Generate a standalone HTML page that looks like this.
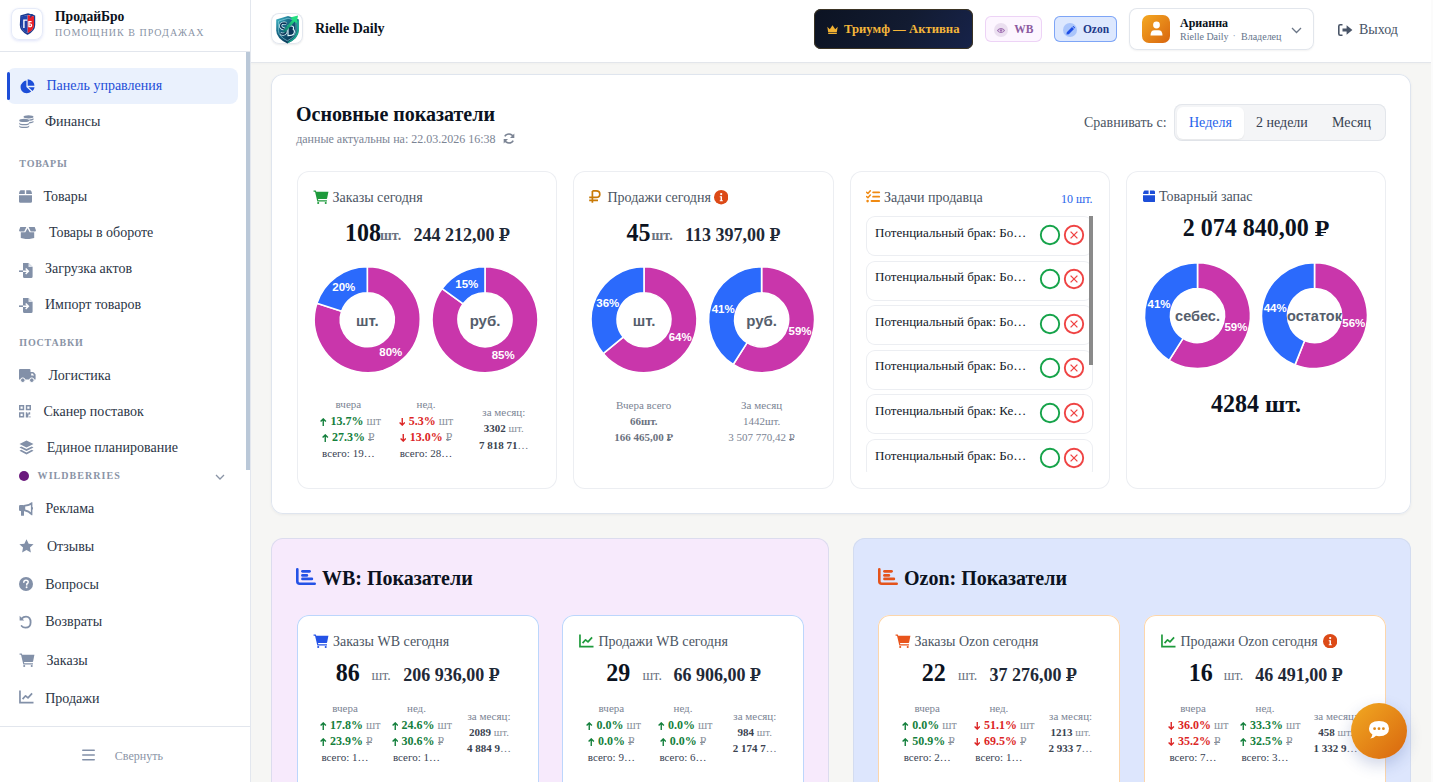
<!DOCTYPE html><html><head><meta charset="utf-8"><style>
html,body{margin:0;padding:0}
body{width:1433px;height:782px;overflow:hidden;position:relative;background:#f6f6f4;font-family:"Liberation Serif",serif}
.t{position:absolute;line-height:1;white-space:nowrap}
.r{position:absolute;display:block}
.rub{position:relative;display:inline-block}
.rub::after{content:"";position:absolute;left:0.02em;top:0.635em;width:0.44em;height:0.075em;background:currentColor}
.dg{display:inline-block;transform:scaleY(1.09);transform-origin:50% 83.75%}
.ar{display:inline-block;vertical-align:-1px;margin-right:3.5px}
</style></head><body>

<div class="r" style="left:0.00px;top:0.00px;width:250.00px;height:782.00px;background:#fff;border-radius:0px;"></div>
<div class="r" style="left:250.00px;top:0.00px;width:1.00px;height:782.00px;background:#e3e7ee;border-radius:0px;"></div>
<div class="r" style="left:0.00px;top:51.00px;width:250.00px;height:1.00px;background:#e2e6ed;border-radius:0px;"></div>
<div class="r" style="left:246.00px;top:52.00px;width:4.00px;height:418.00px;background:#bac8d8;border-radius:0px;"></div>
<div class="r" style="left:11.00px;top:8.00px;width:32.00px;height:32.00px;background:#fff;border-radius:8px;box-shadow:inset 0 0 0 1px #e1e7f7;box-shadow:0 1px 3px rgba(80,100,220,0.18), inset 0 0 0 1px #e6ebf8;"></div>
<svg class="r" style="left:19.00px;top:13.00px;" width="17" height="22" viewBox="0 0 17 22"><path d="M2 3 L9 1 L15.5 3 L15.5 12 Q15.5 17.5 8.5 21 Q1.5 17.5 1.5 12Z" fill="#fff" stroke="#1a3a8f" stroke-width="1.4"/><path d="M8.5 2 L15 3.6 V12 Q15 17 8.5 20.3Z" fill="#e8202a"/><path d="M8.5 2 L2 3.6 V12 Q2 17 8.5 20.3Z" fill="#2043a8"/><path d="M4.2 6.5 H8.2 V7.8 H5.6 V15 H4.2Z" fill="#fff"/><path d="M9.3 8 H12.6 V9.2 H10.6 V10.4 H11.6 Q13.2 10.4 13.2 12.2 Q13.2 14.2 11.6 14.2 H9.3Z M10.6 11.5 V13.1 H11.4 Q11.9 13.1 11.9 12.3 Q11.9 11.5 11.4 11.5Z" fill="#fff"/><path d="M12 1 L10.5 5.5 L14.5 1.5Z" fill="#1a3a8f"/></svg>
<div class="t" style="top:9.91px;font-size:13.6px;color:#0b1220;font-weight:700;font-family:'Liberation Serif', serif;left:55.00px;">ПродайБро</div>
<div class="t" style="top:28.03px;font-size:10px;color:#8a94a6;font-weight:400;font-family:'Liberation Serif', serif;letter-spacing:1px;left:55.00px;">ПОМОЩНИК В ПРОДАЖАХ</div>
<div class="r" style="left:7.00px;top:68.00px;width:231.00px;height:36.00px;background:#eaf1fd;border-radius:8px;"></div>
<div class="r" style="left:7.00px;top:72.00px;width:3.00px;height:28.00px;background:#1d4ed8;border-radius:2px;"></div>
<svg class="r" style="left:20.00px;top:79.00px;" width="15" height="15" viewBox="0 0 16 16"><path d="M6.8 1.6 V8.6 L12 13.4 Q10 15.3 7.2 15.3 Q3.8 15.3 1.9 12.8 Q0.6 11.1 0.6 8.6 Q0.6 5.6 2.8 3.6 Q4.5 1.9 6.8 1.6Z" fill="#1d4ed8"/><path d="M8.2 0.3 Q11.6 0.5 13.8 3 Q15.3 4.8 15.4 7.1 H8.2Z" fill="#1d4ed8"/><path d="M9 8.7 H15.5 Q15.3 11 13.4 12.9Z" fill="#1d4ed8"/></svg>
<div class="t" style="top:78.98px;font-size:14px;color:#1d4ed8;font-weight:400;font-family:'Liberation Serif', serif;left:46.50px;">Панель управления</div>
<svg class="r" style="left:19.00px;top:115.00px;" width="15" height="14" viewBox="0 0 15 14"><ellipse cx="9.5" cy="1.8" rx="5" ry="1.6" fill="#8290a8"/><path d="M10.2 4.4 Q13.4 4.2 14.5 3.3 V4.7 Q13.4 5.6 10.2 5.8Z M10.2 7 Q13.4 6.8 14.5 5.9 V7.3 Q13.4 8.2 10.2 8.4Z" fill="#8290a8"/><ellipse cx="5.2" cy="5.4" rx="5" ry="1.7" fill="#8290a8"/><path d="M0.2 7.4 Q0.6 8.9 5.2 8.9 Q9.8 8.9 10.2 7.4 V8.8 Q9.8 10.3 5.2 10.3 Q0.6 10.3 0.2 8.8Z M0.2 10.2 Q0.6 11.7 5.2 11.7 Q9.8 11.7 10.2 10.2 V11.6 Q9.8 13.1 5.2 13.1 Q0.6 13.1 0.2 11.6Z" fill="#8290a8"/></svg>
<div class="t" style="top:114.98px;font-size:14px;color:#2b3546;font-weight:400;font-family:'Liberation Serif', serif;left:45.00px;">Финансы</div>
<div class="t" style="top:159.32px;font-size:10px;color:#8a94a6;font-weight:700;font-family:'Liberation Serif', serif;letter-spacing:0.8px;left:19.30px;">ТОВАРЫ</div>
<svg class="r" style="left:19.00px;top:190.00px;" width="13" height="13" viewBox="0 0 13 13"><path d="M1.5 0.3 H5.8 V4 H0 Q0 1.4 1.5 0.3Z M7.2 0.3 H11.5 Q13 1.4 13 4 H7.2Z M0 5.2 H13 V11.4 Q13 12.8 11.6 12.8 H1.4 Q0 12.8 0 11.4Z" fill="#8290a8"/></svg>
<div class="t" style="top:189.97px;font-size:14px;color:#2b3546;font-weight:400;font-family:'Liberation Serif', serif;left:43.50px;">Товары</div>
<svg class="r" style="left:19.00px;top:226.50px;" width="17" height="12.5" viewBox="0 0 17 12.5"><path d="M0 3.6 L1.3 0 H7.4 L5.3 4.4 H0.7Z M17 3.6 L15.7 0 H9.6 L11.7 4.4 H16.3Z M8.5 1.2 L6.3 5.3 H10.7Z M1.8 5.3 H15.2 V11 L8.5 12.4 L1.8 11Z" fill="#8290a8"/></svg>
<div class="t" style="top:225.97px;font-size:14px;color:#2b3546;font-weight:400;font-family:'Liberation Serif', serif;left:48.90px;">Товары в обороте</div>
<svg class="r" style="left:19.00px;top:262.50px;" width="14" height="15" viewBox="0 0 14 15"><path d="M4 0 H9.5 L13.6 4 V13.5 Q13.6 15 12.2 15 H5.4 Q4 15 4 13.5 V9 H7.6 L6.2 10.4 L7.2 11.4 L10.4 8.2 L7.2 5 L6.2 6 L7.6 7.4 H4Z" fill="#8290a8"/><path d="M9.5 0 V4 H13.6" fill="#dfe4ec"/><path d="M0 7.4 H4 V9 H0Z" fill="#8290a8"/></svg>
<div class="t" style="top:262.27px;font-size:14px;color:#2b3546;font-weight:400;font-family:'Liberation Serif', serif;left:45.00px;">Загрузка актов</div>
<svg class="r" style="left:19.00px;top:298.00px;" width="14" height="15" viewBox="0 0 14 15"><path d="M4 0 H9.5 L13.6 4 V13.5 Q13.6 15 12.2 15 H5.4 Q4 15 4 13.5 V9 H7.6 L6.2 10.4 L7.2 11.4 L10.4 8.2 L7.2 5 L6.2 6 L7.6 7.4 H4Z" fill="#8290a8"/><path d="M9.5 0 V4 H13.6" fill="#dfe4ec"/><path d="M0 7.4 H4 V9 H0Z" fill="#8290a8"/></svg>
<div class="t" style="top:297.67px;font-size:14px;color:#2b3546;font-weight:400;font-family:'Liberation Serif', serif;left:45.00px;">Импорт товаров</div>
<div class="t" style="top:338.32px;font-size:10px;color:#8a94a6;font-weight:700;font-family:'Liberation Serif', serif;letter-spacing:0.8px;left:19.30px;">ПОСТАВКИ</div>
<svg class="r" style="left:19.00px;top:369.00px;" width="17" height="14" viewBox="0 0 17 14"><path d="M0 1 Q0 0 1 0 H10.5 Q11.5 0 11.5 1 V3 H13.8 Q14.6 3 15.2 3.7 L16.6 5.4 V10.6 H0Z" fill="#8290a8"/><path d="M12.2 4.4 H13.6 L15.2 6.4 H12.2Z" fill="#fff"/><circle cx="3.8" cy="11.2" r="2.3" fill="#8290a8" stroke="#fff" stroke-width="1"/><circle cx="12.8" cy="11.2" r="2.3" fill="#8290a8" stroke="#fff" stroke-width="1"/></svg>
<div class="t" style="top:368.97px;font-size:14px;color:#2b3546;font-weight:400;font-family:'Liberation Serif', serif;left:48.60px;">Логистика</div>
<svg class="r" style="left:19.00px;top:405.00px;" width="12" height="13" viewBox="0 0 12 13"><path d="M0 0 H5.2 V5.2 H0Z M1.5 1.5 V3.7 H3.7 V1.5Z M6.8 0 H12 V5.2 H6.8Z M8.3 1.5 V3.7 H10.5 V1.5Z M0 7.2 H5.2 V12.4 H0Z M1.5 8.7 V10.9 H3.7 V8.7Z" fill="#8290a8" fill-rule="evenodd"/><path d="M6.8 7.2 H8.3 V8.6 H9.6 V7.2 H11.2 V9.6 H9.4 V12.4 H6.8Z" fill="#8290a8"/><rect x="10.2" y="11.4" width="1.4" height="1" fill="#8290a8"/></svg>
<div class="t" style="top:405.17px;font-size:14px;color:#2b3546;font-weight:400;font-family:'Liberation Serif', serif;left:43.50px;">Сканер поставок</div>
<svg class="r" style="left:19.00px;top:440.00px;" width="15" height="15" viewBox="0 0 15 15"><path d="M7.5 0.5 L14.5 4 L7.5 7.6 L0.5 4Z" fill="#8290a8"/><path d="M2.2 6.4 L0.5 7.4 L7.5 11 L14.5 7.4 L12.8 6.4 L7.5 9.1Z" fill="#8290a8"/><path d="M2.2 9.8 L0.5 10.8 L7.5 14.4 L14.5 10.8 L12.8 9.8 L7.5 12.5Z" fill="#8290a8"/></svg>
<div class="t" style="top:441.27px;font-size:14px;color:#2b3546;font-weight:400;font-family:'Liberation Serif', serif;left:46.80px;">Единое планирование</div>
<div class="r" style="left:18.80px;top:471.40px;width:10.00px;height:10.00px;background:#6b1a7d;border-radius:5px;"></div>
<div class="t" style="top:471.32px;font-size:10px;color:#8a94a6;font-weight:700;font-family:'Liberation Serif', serif;letter-spacing:1.05px;left:37.60px;">WILDBERRIES</div>
<svg class="r" style="left:215.00px;top:474.00px;" width="10" height="6" viewBox="0 0 10 6"><path d="M1 1 L5 5 L9 1" stroke="#8a94a6" stroke-width="1.3" fill="none"/></svg>
<svg class="r" style="left:19.00px;top:502.00px;" width="14" height="14" viewBox="0 0 14 14"><rect x="0" y="3" width="5.2" height="6" rx="1.2" fill="#8290a8"/><rect x="2" y="8" width="3" height="5.8" rx="0.6" fill="#8290a8"/><path d="M4.8 3 Q9.5 3 12.5 0.2 H13.4 V13.2 H12.5 Q9.5 9.8 4.8 9Z M6.2 4.5 V7.6 Q9.6 8.2 11.9 10.2 V3 Q9.6 4.4 6.2 4.5Z" fill="#8290a8" fill-rule="evenodd"/><rect x="13" y="5" width="1" height="2.6" rx="0.5" fill="#8290a8"/></svg>
<div class="t" style="top:501.97px;font-size:14px;color:#2b3546;font-weight:400;font-family:'Liberation Serif', serif;left:45.50px;">Реклама</div>
<svg class="r" style="left:19.00px;top:538.50px;" width="15" height="14" viewBox="0 0 16 15"><path d="M8 0.3 L10.3 5 L15.6 5.6 L11.7 9.2 L12.7 14.5 L8 11.9 L3.3 14.5 L4.3 9.2 L0.4 5.6 L5.7 5Z" fill="#8290a8"/></svg>
<div class="t" style="top:539.77px;font-size:14px;color:#2b3546;font-weight:400;font-family:'Liberation Serif', serif;left:46.90px;">Отзывы</div>
<svg class="r" style="left:19.00px;top:577.00px;" width="14" height="14" viewBox="0 0 14 14"><circle cx="7" cy="7" r="7" fill="#8290a8"/><path d="M4.8 5.2 Q4.9 3.2 7 3.2 Q9.2 3.2 9.2 5 Q9.2 6.2 7.8 6.9 V8" stroke="#fff" stroke-width="1.5" fill="none" stroke-linecap="round"/><circle cx="7.6" cy="10.3" r="0.95" fill="#fff"/></svg>
<div class="t" style="top:577.68px;font-size:14px;color:#2b3546;font-weight:400;font-family:'Liberation Serif', serif;left:45.20px;">Вопросы</div>
<svg class="r" style="left:19.00px;top:615.00px;" width="13" height="14" viewBox="0 0 13 14"><path d="M2.6 3.6 Q4.4 1.6 7 1.6 Q11.6 1.6 11.6 7.4 Q11.6 12.6 6.4 12.6 Q4 12.6 2.6 11" stroke="#8290a8" stroke-width="1.8" fill="none" stroke-linecap="round"/><path d="M0.6 0.8 V5.4 H5.2Z" fill="#8290a8"/></svg>
<div class="t" style="top:615.48px;font-size:14px;color:#2b3546;font-weight:400;font-family:'Liberation Serif', serif;left:45.20px;">Возвраты</div>
<svg class="r" style="left:19.00px;top:653.00px;" width="16" height="14" viewBox="0 0 18 16"><path d="M0.5 0.6 H3 L3.6 2 H17.5 L16 9.4 Q15.7 10.4 14.6 10.4 H5.6 L5.9 11.8 H15.8 V13.2 H4.8 L2.2 2 H0.5Z" fill="#8290a8"/><circle cx="5.8" cy="14.8" r="1.2" fill="#8290a8"/><circle cx="14.4" cy="14.8" r="1.2" fill="#8290a8"/></svg>
<div class="t" style="top:653.68px;font-size:14px;color:#2b3546;font-weight:400;font-family:'Liberation Serif', serif;left:46.60px;">Заказы</div>
<svg class="r" style="left:19.00px;top:690.00px;" width="15" height="14" viewBox="0 0 16 15"><path d="M1 0.5 V13.5 H15.5" stroke="#8290a8" stroke-width="1.8" fill="none"/><path d="M3.8 9.8 L7 6.2 L9.6 8.4 L14 3.6" stroke="#8290a8" stroke-width="1.8" fill="none" stroke-linejoin="round"/></svg>
<div class="t" style="top:691.58px;font-size:14px;color:#2b3546;font-weight:400;font-family:'Liberation Serif', serif;left:45.20px;">Продажи</div>
<div class="r" style="left:0.00px;top:726.00px;width:250.00px;height:1.00px;background:#e2e6ed;border-radius:0px;"></div>
<svg class="r" style="left:82.00px;top:749.00px;" width="13" height="12" viewBox="0 0 13 12"><rect x="0" y="0.5" width="13" height="1.6" rx="0.8" fill="#8290a8"/><rect x="0" y="5.2" width="13" height="1.6" rx="0.8" fill="#8290a8"/><rect x="0" y="9.9" width="13" height="1.6" rx="0.8" fill="#8290a8"/></svg>
<div class="t" style="top:750.15px;font-size:12px;color:#8a94a6;font-weight:400;font-family:'Liberation Serif', serif;left:114.80px;">Свернуть</div>
<div class="r" style="left:251.00px;top:0.00px;width:1180.00px;height:62.00px;background:#fff;border-radius:0px;"></div>
<div class="r" style="left:251.00px;top:62.00px;width:1180.00px;height:1.00px;background:#e3e6eb;border-radius:0px;box-shadow:0 1px 2px rgba(0,0,0,0.04);"></div>
<div class="r" style="left:1431.00px;top:0.00px;width:2.00px;height:782.00px;background:#fbfbfb;border-radius:0px;"></div>
<div class="r" style="left:271.00px;top:13.00px;width:32.00px;height:31.00px;background:#fff;border-radius:8px;box-shadow:inset 0 0 0 1px #e3e7ee;box-shadow:0 1px 2px rgba(0,0,0,0.08), inset 0 0 0 1px #e3e7ee;"></div>
<svg class="r" style="left:275.00px;top:14.50px;" width="25" height="29" viewBox="0 0 25 29"><defs><linearGradient id="lg1" x1="0" y1="0" x2="0.8" y2="1"><stop offset="0" stop-color="#46c3cf"/><stop offset="0.35" stop-color="#1a6f8c"/><stop offset="1" stop-color="#052848"/></linearGradient><linearGradient id="lg2" x1="0" y1="1" x2="1" y2="0"><stop offset="0" stop-color="#0c6e74"/><stop offset="1" stop-color="#25e07e"/></linearGradient></defs><path d="M1.2 4.6 L13 1 L23.8 4.4 V15.6 Q23.6 23.6 12.4 28.6 Q1.4 23.6 1.2 15.6Z" fill="url(#lg1)"/><path d="M23.8 4.4 V15.6 Q23.6 23.6 12.4 28.6 L13.5 26.4 Q21.6 22 21.8 15 V6Z" fill="#1fc7a0" opacity="0.75"/><path d="M3.4 6.2 L13 3.2 L21 5.6 V15.4 Q20.8 21.6 12.4 25.8 Q3.6 21.6 3.4 15.4Z" fill="none" stroke="#9fe6ee" stroke-width="0.7" opacity="0.8"/><path d="M11.4 8.4 Q6.2 7.2 5.6 10.6 Q5.4 13 9 14 Q11.6 14.8 10.8 17.4 Q9.6 20.2 5.4 18.6" stroke="#e6fbff" stroke-width="3" fill="none"/><path d="M11.4 8.4 Q6.2 7.2 5.6 10.6 Q5.4 13 9 14 Q11.6 14.8 10.8 17.4 Q9.6 20.2 5.4 18.6" stroke="#0a3558" stroke-width="1.6" fill="none"/><path d="M13 11 H16.6 Q19.4 11.4 18.2 14.2 Q20.4 15.6 18.6 19.2 Q17.4 20.6 13 20.6Z" fill="#0a3558" stroke="#e6fbff" stroke-width="1.1"/><path d="M8.6 17.2 L19.4 4.6" stroke="url(#lg2)" stroke-width="2.8"/><path d="M15.2 2.6 L23 0.6 L21.6 8.6Z" fill="#22dd80"/></svg>
<div class="t" style="top:21.77px;font-size:14px;color:#0b1220;font-weight:700;font-family:'Liberation Serif', serif;left:315.00px;">Rielle Daily</div>
<div class="r" style="left:814.00px;top:9.00px;width:159.00px;height:40.00px;background:linear-gradient(120deg,#0c1322 0%,#121b31 55%,#17234a 100%);border-radius:7px;box-shadow:inset 0 0 0 1px #3b3424;"></div>
<svg class="r" style="left:826.50px;top:25.00px;" width="11" height="9" viewBox="0 0 11 9"><path d="M0.3 1.8 L2.8 4.2 L5.5 0.3 L8.2 4.2 L10.7 1.8 L9.8 7.2 H1.2Z" fill="#f2b233"/><rect x="1.2" y="7.8" width="8.6" height="1.2" fill="#f2b233"/></svg>
<div class="t" style="top:22.66px;font-size:12.7px;color:#f4b63a;font-weight:700;font-family:'Liberation Serif', serif;left:844.00px;">Триумф — Активна</div>
<div class="r" style="left:985.00px;top:16.00px;width:57.00px;height:26.00px;background:#fdf6ff;border-radius:6px;box-shadow:inset 0 0 0 1px #edd3f6;"></div>
<div class="r" style="left:994.00px;top:23.00px;width:14.00px;height:14.00px;background:#ebdff0;border-radius:7px;"></div>
<svg class="r" style="left:997.00px;top:26.50px;" width="8" height="7" viewBox="0 0 8 7"><path d="M0.5 3.5 Q4 -0.6 7.5 3.5 Q4 7.6 0.5 3.5Z" fill="none" stroke="#a06fb2" stroke-width="1.1"/><circle cx="4" cy="3.5" r="1.2" fill="#a06fb2"/></svg>
<div class="t" style="top:24.27px;font-size:11.5px;color:#8c5aa0;font-weight:700;font-family:'Liberation Serif', serif;left:1014.30px;">WB</div>
<div class="r" style="left:1054.00px;top:16.00px;width:63.00px;height:26.00px;background:#dde8fe;border-radius:6px;box-shadow:inset 0 0 0 1px #7ea5f6;"></div>
<div class="r" style="left:1063.00px;top:23.00px;width:14.00px;height:14.00px;background:#aac5fb;border-radius:7px;"></div>
<svg class="r" style="left:1065.50px;top:25.50px;" width="9" height="9" viewBox="0 0 9 9"><path d="M0.4 8.6 L0.8 6.2 L6 1 L8 3 L2.8 8.2Z M6.6 0.4 L7.2 -0.2 L9.2 1.8 L8.6 2.4Z" fill="#1f4fe6"/></svg>
<div class="t" style="top:24.27px;font-size:11.5px;color:#1e3a8a;font-weight:700;font-family:'Liberation Serif', serif;left:1082.90px;">Ozon</div>
<div class="r" style="left:1129.00px;top:8.00px;width:185.00px;height:42.00px;background:#fff;border-radius:8px;box-shadow:inset 0 0 0 1px #e2e6ec;box-shadow:0 1px 2px rgba(0,0,0,0.05), inset 0 0 0 1px #e2e6ec;"></div>
<div class="r" style="left:1142.00px;top:15.00px;width:28.00px;height:28.00px;background:linear-gradient(135deg,#f4a922,#d8650f);border-radius:7px;"></div>
<svg class="r" style="left:1149.50px;top:21.00px;" width="13" height="15" viewBox="0 0 13 15"><circle cx="6.5" cy="4" r="3.4" fill="#fff"/><path d="M0.5 14.5 Q0.5 9.2 4.5 9.2 H8.5 Q12.5 9.2 12.5 14.5Z" fill="#fff"/></svg>
<div class="t" style="top:16.85px;font-size:12px;color:#0b1220;font-weight:700;font-family:'Liberation Serif', serif;left:1180.00px;">Арианна</div>
<div class="t" style="top:31.62px;font-size:10px;color:#64748b;font-weight:400;font-family:'Liberation Serif', serif;left:1180.00px;">Rielle Daily</div>
<div class="t" style="top:30.82px;font-size:10px;color:#94a3b8;font-weight:400;font-family:'Liberation Serif', serif;left:1232.50px;">·</div>
<div class="t" style="top:31.62px;font-size:10px;color:#64748b;font-weight:400;font-family:'Liberation Serif', serif;left:1241.00px;">Владелец</div>
<svg class="r" style="left:1290.50px;top:26.50px;" width="11" height="7" viewBox="0 0 11 7"><path d="M1 1 L5.5 5.5 L10 1" stroke="#6b7687" stroke-width="1.3" fill="none"/></svg>
<svg class="r" style="left:1338.00px;top:23.50px;" width="15" height="12" viewBox="0 0 15 12"><path d="M4.5 0.8 H2.2 Q0.8 0.8 0.8 2.2 V9.8 Q0.8 11.2 2.2 11.2 H4.5" stroke="#4a5568" stroke-width="1.6" fill="none"/><path d="M4.5 4.4 H8.6 V1.2 L14.4 6 L8.6 10.8 V7.6 H4.5Z" fill="#4a5568"/></svg>
<div class="t" style="top:22.87px;font-size:14px;color:#475467;font-weight:400;font-family:'Liberation Serif', serif;left:1359.00px;">Выход</div>
<div class="r" style="left:271.00px;top:74.00px;width:1140.00px;height:440.00px;background:#fff;border-radius:12px;box-shadow:inset 0 0 0 1px #dfe5ee;box-shadow:0 1px 3px rgba(15,23,42,0.05), inset 0 0 0 1px #dfe5ee;"></div>
<div class="t" style="top:103.75px;font-size:20px;color:#0b1220;font-weight:700;font-family:'Liberation Serif', serif;left:296.00px;">Основные показатели</div>
<div class="t" style="top:133.35px;font-size:12px;color:#7b8494;font-weight:400;font-family:'Liberation Serif', serif;left:296.20px;">данные актуальны на: 22.03.2026 16:38</div>
<svg class="r" style="left:503.00px;top:132.60px;" width="12" height="11" viewBox="0 0 12 11"><path d="M10.2 4.2 Q9.4 1 6 1 Q3 1 1.8 3.4" stroke="#7b8494" stroke-width="1.5" fill="none"/><path d="M11.3 0.6 V4.9 H7Z" fill="#7b8494"/><path d="M1.8 6.8 Q2.6 10 6 10 Q9 10 10.2 7.6" stroke="#7b8494" stroke-width="1.5" fill="none"/><path d="M0.7 10.4 V6.1 H5Z" fill="#7b8494"/></svg>
<div class="t" style="top:115.58px;font-size:14px;color:#4b5563;font-weight:400;font-family:'Liberation Serif', serif;left:1084.00px;">Сравнивать с:</div>
<div class="r" style="left:1174.00px;top:104.00px;width:212.00px;height:37.00px;background:#f4f5f7;border-radius:8px;box-shadow:inset 0 0 0 1px #e3e6eb;"></div>
<div class="r" style="left:1177.00px;top:107.00px;width:67.00px;height:32.00px;background:#fff;border-radius:6px;box-shadow:0 1px 2px rgba(0,0,0,0.06);"></div>
<div class="t" style="top:115.58px;font-size:14px;color:#2563eb;font-weight:400;font-family:'Liberation Serif', serif;left:1189.00px;">Неделя</div>
<div class="t" style="top:115.58px;font-size:14px;color:#374151;font-weight:400;font-family:'Liberation Serif', serif;left:1256.00px;">2 недели</div>
<div class="t" style="top:115.58px;font-size:14px;color:#374151;font-weight:400;font-family:'Liberation Serif', serif;left:1332.00px;">Месяц</div>
<div class="r" style="left:297.00px;top:171.00px;width:260.25px;height:318.00px;background:#fff;border-radius:12px;box-shadow:inset 0 0 0 1px #eceef2;"></div>
<div class="r" style="left:573.25px;top:171.00px;width:260.25px;height:318.00px;background:#fff;border-radius:12px;box-shadow:inset 0 0 0 1px #eceef2;"></div>
<div class="r" style="left:849.50px;top:171.00px;width:260.25px;height:318.00px;background:#fff;border-radius:12px;box-shadow:inset 0 0 0 1px #eceef2;"></div>
<div class="r" style="left:1125.75px;top:171.00px;width:260.25px;height:318.00px;background:#fff;border-radius:12px;box-shadow:inset 0 0 0 1px #eceef2;"></div>
<svg class="r" style="left:313.00px;top:189.50px;" width="16" height="14" viewBox="0 0 18 16"><path d="M0.5 0.6 H3 L3.6 2 H17.5 L16 9.4 Q15.7 10.4 14.6 10.4 H5.6 L5.9 11.8 H15.8 V13.2 H4.8 L2.2 2 H0.5Z" fill="#1e9a3c"/><circle cx="5.8" cy="14.8" r="1.2" fill="#1e9a3c"/><circle cx="14.4" cy="14.8" r="1.2" fill="#1e9a3c"/></svg>
<div class="t" style="top:190.97px;font-size:14px;color:#4b5563;font-weight:400;font-family:'Liberation Serif', serif;left:332.60px;">Заказы сегодня</div>
<div class="t" style="top:220.60px;font-size:24px;color:#0b1220;font-weight:700;font-family:'Liberation Serif', serif;left:345.00px;"><span class="dg">108</span></div>
<div class="t" style="top:228.97px;font-size:14px;color:#6b7280;font-weight:700;font-family:'Liberation Serif', serif;left:380.00px;">шт.</div>
<div class="t" style="top:225.62px;font-size:18px;color:#1f2937;font-weight:700;font-family:'Liberation Serif', serif;left:413.50px;">244 212,00 <span class="rub">Р</span></div>
<svg class="r" style="left:0;top:0" width="1433" height="782"><path d="M367.30 266.70 A53 53 0 1 1 316.89 303.32 L341.62 311.36 A27 27 0 1 0 367.30 292.70Z" fill="#c936ab" stroke="#fff" stroke-width="1.6" stroke-linejoin="round"/><path d="M316.89 303.32 A53 53 0 0 1 367.30 266.70 L367.30 292.70 A27 27 0 0 0 341.62 311.36Z" fill="#2b6afc" stroke="#fff" stroke-width="1.6" stroke-linejoin="round"/></svg>
<div class="t" style="top:347.03px;font-size:11.5px;color:#fff;font-weight:700;font-family:'Liberation Sans', sans-serif;left:90.81px;width:600px;text-align:center;">80%</div>
<div class="t" style="top:282.30px;font-size:11.5px;color:#fff;font-weight:700;font-family:'Liberation Sans', sans-serif;left:43.79px;width:600px;text-align:center;">20%</div>
<div class="t" style="top:312.70px;font-size:15px;color:#555e6c;font-weight:700;font-family:'Liberation Sans', sans-serif;left:67.30px;width:600px;text-align:center;">шт.</div>
<svg class="r" style="left:0;top:0" width="1433" height="782"><path d="M485.00 266.70 A53 53 0 1 1 442.12 288.55 L463.16 303.83 A27 27 0 1 0 485.00 292.70Z" fill="#c936ab" stroke="#fff" stroke-width="1.6" stroke-linejoin="round"/><path d="M442.12 288.55 A53 53 0 0 1 485.00 266.70 L485.00 292.70 A27 27 0 0 0 463.16 303.83Z" fill="#2b6afc" stroke="#fff" stroke-width="1.6" stroke-linejoin="round"/></svg>
<div class="t" style="top:350.31px;font-size:11.5px;color:#fff;font-weight:700;font-family:'Liberation Sans', sans-serif;left:203.16px;width:600px;text-align:center;">85%</div>
<div class="t" style="top:279.02px;font-size:11.5px;color:#fff;font-weight:700;font-family:'Liberation Sans', sans-serif;left:166.84px;width:600px;text-align:center;">15%</div>
<div class="t" style="top:312.70px;font-size:15px;color:#555e6c;font-weight:700;font-family:'Liberation Sans', sans-serif;left:185.00px;width:600px;text-align:center;">руб.</div>
<div class="t" style="top:399.19px;left:320.40px;width:56px;text-align:center;font-size:11px;color:#7b8494;font-weight:400">вчера</div>
<div class="t" style="top:414.95px;left:320.40px;width:56px;text-align:center;font-size:12px;color:#15803d;font-weight:400"><svg class="ar" width="6.5" height="8" viewBox="0 0 6.5 8"><path d="M3.25 8 V1.2 M0.6 3.6 L3.25 0.9 L5.9 3.6" stroke="currentColor" stroke-width="1.4" fill="none"/></svg><span style="font-weight:700;font-size:12px">13.7%</span> <span style="color:#8a919c;font-size:12px">шт</span></div>
<div class="t" style="top:430.95px;left:320.40px;width:56px;text-align:center;font-size:12px;color:#15803d;font-weight:400"><svg class="ar" width="6.5" height="8" viewBox="0 0 6.5 8"><path d="M3.25 8 V1.2 M0.6 3.6 L3.25 0.9 L5.9 3.6" stroke="currentColor" stroke-width="1.4" fill="none"/></svg><span style="font-weight:700;font-size:12px">27.3%</span> <span style="color:#8a919c;font-size:12px"><span class="rub">Р</span></span></div>
<div class="t" style="top:448.19px;left:320.40px;width:56px;text-align:center;font-size:11px;color:#374151;font-weight:400">всего: 19…</div>
<div class="t" style="top:399.19px;left:398.00px;width:56px;text-align:center;font-size:11px;color:#7b8494;font-weight:400">нед.</div>
<div class="t" style="top:414.95px;left:398.00px;width:56px;text-align:center;font-size:12px;color:#dc2626;font-weight:400"><svg class="ar" width="6.5" height="8" viewBox="0 0 6.5 8"><path d="M3.25 0 V6.8 M0.6 4.4 L3.25 7.1 L5.9 4.4" stroke="currentColor" stroke-width="1.4" fill="none"/></svg><span style="font-weight:700;font-size:12px">5.3%</span> <span style="color:#8a919c;font-size:12px">шт</span></div>
<div class="t" style="top:430.95px;left:398.00px;width:56px;text-align:center;font-size:12px;color:#dc2626;font-weight:400"><svg class="ar" width="6.5" height="8" viewBox="0 0 6.5 8"><path d="M3.25 0 V6.8 M0.6 4.4 L3.25 7.1 L5.9 4.4" stroke="currentColor" stroke-width="1.4" fill="none"/></svg><span style="font-weight:700;font-size:12px">13.0%</span> <span style="color:#8a919c;font-size:12px"><span class="rub">Р</span></span></div>
<div class="t" style="top:448.19px;left:398.00px;width:56px;text-align:center;font-size:11px;color:#374151;font-weight:400">всего: 28…</div>
<div class="t" style="top:407.19px;left:475.80px;width:56px;text-align:center;font-size:11px;color:#7b8494;font-weight:400">за месяц:</div>
<div class="t" style="top:423.19px;left:475.80px;width:56px;text-align:center;font-size:11px;color:#3b4350;font-weight:400"><b style="color:#3b4350">3302</b> <span style="color:#8a919c">шт.</span></div>
<div class="t" style="top:439.59px;left:475.80px;width:56px;text-align:center;font-size:11px;color:#3b4350;font-weight:400"><b>7 818 71</b><span style="font-weight:400;color:#6b7280">…</span></div>
<svg class="r" style="left:589.00px;top:190.00px;" width="12" height="13" viewBox="0 0 12 13"><path d="M3.4 0.9 V12.7 M3.4 0.9 H7.2 Q10.8 0.9 10.8 4.2 Q10.8 7.4 7.2 7.4 H0.2 M0.2 10.3 H9" stroke="#c97a06" stroke-width="1.7" fill="none"/></svg>
<div class="t" style="top:190.97px;font-size:14px;color:#4b5563;font-weight:400;font-family:'Liberation Serif', serif;left:607.50px;">Продажи сегодня</div>
<svg class="r" style="left:714.00px;top:190.20px;" width="14.4" height="14.4" viewBox="0 0 14 14"><circle cx="7" cy="7" r="7" fill="#dc4a17"/><circle cx="7" cy="4" r="1.1" fill="#fff"/><path d="M5.6 6 H7.8 V10 H8.6 V11 H5.6 V10 H6.4 V7 H5.6Z" fill="#fff"/></svg>
<div class="t" style="top:220.60px;font-size:24px;color:#0b1220;font-weight:700;font-family:'Liberation Serif', serif;left:626.50px;"><span class="dg">45</span></div>
<div class="t" style="top:228.97px;font-size:14px;color:#6b7280;font-weight:700;font-family:'Liberation Serif', serif;left:651.50px;">шт.</div>
<div class="t" style="top:225.62px;font-size:18px;color:#1f2937;font-weight:700;font-family:'Liberation Serif', serif;left:685.00px;">113 397,00 <span class="rub">Р</span></div>
<svg class="r" style="left:0;top:0" width="1433" height="782"><path d="M644.00 266.80 A53 53 0 1 1 603.16 353.58 L623.20 337.01 A27 27 0 1 0 644.00 292.80Z" fill="#c936ab" stroke="#fff" stroke-width="1.6" stroke-linejoin="round"/><path d="M603.16 353.58 A53 53 0 0 1 644.00 266.80 L644.00 292.80 A27 27 0 0 0 623.20 337.01Z" fill="#2b6afc" stroke="#fff" stroke-width="1.6" stroke-linejoin="round"/></svg>
<div class="t" style="top:331.80px;font-size:11.5px;color:#fff;font-weight:700;font-family:'Liberation Sans', sans-serif;left:380.19px;width:600px;text-align:center;">64%</div>
<div class="t" style="top:297.73px;font-size:11.5px;color:#fff;font-weight:700;font-family:'Liberation Sans', sans-serif;left:307.81px;width:600px;text-align:center;">36%</div>
<div class="t" style="top:312.80px;font-size:15px;color:#555e6c;font-weight:700;font-family:'Liberation Sans', sans-serif;left:344.00px;width:600px;text-align:center;">шт.</div>
<svg class="r" style="left:0;top:0" width="1433" height="782"><path d="M761.60 266.80 A53 53 0 1 1 733.20 364.55 L747.13 342.60 A27 27 0 1 0 761.60 292.80Z" fill="#c936ab" stroke="#fff" stroke-width="1.6" stroke-linejoin="round"/><path d="M733.20 364.55 A53 53 0 0 1 761.60 266.80 L761.60 292.80 A27 27 0 0 0 747.13 342.60Z" fill="#2b6afc" stroke="#fff" stroke-width="1.6" stroke-linejoin="round"/></svg>
<div class="t" style="top:325.92px;font-size:11.5px;color:#fff;font-weight:700;font-family:'Liberation Sans', sans-serif;left:500.01px;width:600px;text-align:center;">59%</div>
<div class="t" style="top:303.61px;font-size:11.5px;color:#fff;font-weight:700;font-family:'Liberation Sans', sans-serif;left:423.19px;width:600px;text-align:center;">41%</div>
<div class="t" style="top:312.80px;font-size:15px;color:#555e6c;font-weight:700;font-family:'Liberation Sans', sans-serif;left:461.60px;width:600px;text-align:center;">руб.</div>
<div class="t" style="top:400.09px;font-size:11px;color:#7b8494;font-weight:400;font-family:'Liberation Serif', serif;left:343.70px;width:600px;text-align:center;">Вчера всего</div>
<div class="t" style="top:416.09px;font-size:11px;color:#6b7280;font-weight:700;font-family:'Liberation Serif', serif;left:343.70px;width:600px;text-align:center;">66шт.</div>
<div class="t" style="top:432.49px;font-size:11px;color:#6b7280;font-weight:700;font-family:'Liberation Serif', serif;left:343.70px;width:600px;text-align:center;">166 465,00 <span class="rub">Р</span></div>
<div class="t" style="top:400.09px;font-size:11px;color:#7b8494;font-weight:400;font-family:'Liberation Serif', serif;left:461.60px;width:600px;text-align:center;">За месяц</div>
<div class="t" style="top:416.09px;font-size:11px;color:#7b8494;font-weight:400;font-family:'Liberation Serif', serif;left:461.60px;width:600px;text-align:center;">1442шт.</div>
<div class="t" style="top:432.49px;font-size:11px;color:#7b8494;font-weight:400;font-family:'Liberation Serif', serif;left:461.60px;width:600px;text-align:center;">3 507 770,42 <span class="rub">Р</span></div>
<svg class="r" style="left:866.00px;top:190.00px;" width="15" height="13" viewBox="0 0 15 13"><path d="M0.5 2.2 L1.9 3.5 L4.3 0.8 M0.5 6.5 L1.9 7.8 L4.3 5.1" stroke="#f08a12" stroke-width="1.5" fill="none" stroke-linecap="round" stroke-linejoin="round"/><circle cx="1.6" cy="11.1" r="1.3" fill="#f08a12"/><rect x="6.2" y="1.4" width="7.9" height="1.9" rx="0.95" fill="#f08a12"/><rect x="6.2" y="5.7" width="7.9" height="1.9" rx="0.95" fill="#f08a12"/><rect x="4.6" y="10.1" width="9.5" height="1.9" rx="0.95" fill="#f08a12"/></svg>
<div class="t" style="top:190.78px;font-size:14px;color:#4b5563;font-weight:400;font-family:'Liberation Serif', serif;left:884.00px;">Задачи продавца</div>
<div class="t" style="top:192.65px;font-size:12px;color:#2563eb;font-weight:400;font-family:'Liberation Serif', serif;left:492.50px;width:600px;text-align:right;">10 шт.</div>
<div class="r" style="left:866px;top:216px;width:227px;height:255.5px;overflow:hidden">
<div class="r" style="left:0;top:0.00px;width:227px;height:40px;border-radius:9px;box-shadow:inset 0 0 0 1px #eceef2;background:#fff"></div>
<div class="t" style="left:9px;top:9.61px;font-size:13px;color:#111827">Потенциальный брак: Бо…</div>
<svg class="r" style="left:173px;top:7.60px" width="22" height="22" viewBox="0 0 22 22"><circle cx="11" cy="11" r="9.2" fill="none" stroke="#16a34a" stroke-width="1.9"/></svg>
<svg class="r" style="left:197px;top:7.60px" width="22" height="22" viewBox="0 0 22 22"><circle cx="11" cy="11" r="9.2" fill="none" stroke="#ef4444" stroke-width="1.9"/><path d="M7.6 7.6 L14.4 14.4 M14.4 7.6 L7.6 14.4" stroke="#ef4444" stroke-width="1.3"/></svg>
<div class="r" style="left:0;top:44.60px;width:227px;height:40px;border-radius:9px;box-shadow:inset 0 0 0 1px #eceef2;background:#fff"></div>
<div class="t" style="left:9px;top:54.21px;font-size:13px;color:#111827">Потенциальный брак: Бо…</div>
<svg class="r" style="left:173px;top:52.20px" width="22" height="22" viewBox="0 0 22 22"><circle cx="11" cy="11" r="9.2" fill="none" stroke="#16a34a" stroke-width="1.9"/></svg>
<svg class="r" style="left:197px;top:52.20px" width="22" height="22" viewBox="0 0 22 22"><circle cx="11" cy="11" r="9.2" fill="none" stroke="#ef4444" stroke-width="1.9"/><path d="M7.6 7.6 L14.4 14.4 M14.4 7.6 L7.6 14.4" stroke="#ef4444" stroke-width="1.3"/></svg>
<div class="r" style="left:0;top:89.20px;width:227px;height:40px;border-radius:9px;box-shadow:inset 0 0 0 1px #eceef2;background:#fff"></div>
<div class="t" style="left:9px;top:98.81px;font-size:13px;color:#111827">Потенциальный брак: Бо…</div>
<svg class="r" style="left:173px;top:96.80px" width="22" height="22" viewBox="0 0 22 22"><circle cx="11" cy="11" r="9.2" fill="none" stroke="#16a34a" stroke-width="1.9"/></svg>
<svg class="r" style="left:197px;top:96.80px" width="22" height="22" viewBox="0 0 22 22"><circle cx="11" cy="11" r="9.2" fill="none" stroke="#ef4444" stroke-width="1.9"/><path d="M7.6 7.6 L14.4 14.4 M14.4 7.6 L7.6 14.4" stroke="#ef4444" stroke-width="1.3"/></svg>
<div class="r" style="left:0;top:133.80px;width:227px;height:40px;border-radius:9px;box-shadow:inset 0 0 0 1px #eceef2;background:#fff"></div>
<div class="t" style="left:9px;top:143.41px;font-size:13px;color:#111827">Потенциальный брак: Бо…</div>
<svg class="r" style="left:173px;top:141.40px" width="22" height="22" viewBox="0 0 22 22"><circle cx="11" cy="11" r="9.2" fill="none" stroke="#16a34a" stroke-width="1.9"/></svg>
<svg class="r" style="left:197px;top:141.40px" width="22" height="22" viewBox="0 0 22 22"><circle cx="11" cy="11" r="9.2" fill="none" stroke="#ef4444" stroke-width="1.9"/><path d="M7.6 7.6 L14.4 14.4 M14.4 7.6 L7.6 14.4" stroke="#ef4444" stroke-width="1.3"/></svg>
<div class="r" style="left:0;top:178.40px;width:227px;height:40px;border-radius:9px;box-shadow:inset 0 0 0 1px #eceef2;background:#fff"></div>
<div class="t" style="left:9px;top:188.01px;font-size:13px;color:#111827">Потенциальный брак: Ке…</div>
<svg class="r" style="left:173px;top:186.00px" width="22" height="22" viewBox="0 0 22 22"><circle cx="11" cy="11" r="9.2" fill="none" stroke="#16a34a" stroke-width="1.9"/></svg>
<svg class="r" style="left:197px;top:186.00px" width="22" height="22" viewBox="0 0 22 22"><circle cx="11" cy="11" r="9.2" fill="none" stroke="#ef4444" stroke-width="1.9"/><path d="M7.6 7.6 L14.4 14.4 M14.4 7.6 L7.6 14.4" stroke="#ef4444" stroke-width="1.3"/></svg>
<div class="r" style="left:0;top:223.00px;width:227px;height:40px;border-radius:9px;box-shadow:inset 0 0 0 1px #eceef2;background:#fff"></div>
<div class="t" style="left:9px;top:232.61px;font-size:13px;color:#111827">Потенциальный брак: Бо…</div>
<svg class="r" style="left:173px;top:230.60px" width="22" height="22" viewBox="0 0 22 22"><circle cx="11" cy="11" r="9.2" fill="none" stroke="#16a34a" stroke-width="1.9"/></svg>
<svg class="r" style="left:197px;top:230.60px" width="22" height="22" viewBox="0 0 22 22"><circle cx="11" cy="11" r="9.2" fill="none" stroke="#ef4444" stroke-width="1.9"/><path d="M7.6 7.6 L14.4 14.4 M14.4 7.6 L7.6 14.4" stroke="#ef4444" stroke-width="1.3"/></svg>
</div>
<div class="r" style="left:1089.00px;top:216.00px;width:4.00px;height:149.00px;background:#8a8a8a;border-radius:0px;"></div>
<svg class="r" style="left:1142.50px;top:190.20px;" width="12.5" height="12" viewBox="0 0 12.5 12"><path d="M1.4 0.4 H5.6 V4 H0 Q0 1.4 1.4 0.4Z M6.9 0.4 H11.1 Q12.5 1.4 12.5 4 H6.9Z M0 5.2 H12.5 V10.6 Q12.5 12 11.1 12 H1.4 Q0 12 0 10.6Z" fill="#1d4ed8"/></svg>
<div class="t" style="top:190.47px;font-size:14px;color:#4b5563;font-weight:400;font-family:'Liberation Serif', serif;left:1159.00px;">Товарный запас</div>
<div class="t" style="top:216.30px;font-size:24px;color:#0b1220;font-weight:700;font-family:'Liberation Serif', serif;left:956.00px;width:600px;text-align:center;"><span class="dg">2 074 840,00</span> <span class="rub">Р</span></div>
<svg class="r" style="left:0;top:0" width="1433" height="782"><path d="M1197.50 262.60 A53 53 0 1 1 1169.10 360.35 L1183.03 338.40 A27 27 0 1 0 1197.50 288.60Z" fill="#c936ab" stroke="#fff" stroke-width="1.6" stroke-linejoin="round"/><path d="M1169.10 360.35 A53 53 0 0 1 1197.50 262.60 L1197.50 288.60 A27 27 0 0 0 1183.03 338.40Z" fill="#2b6afc" stroke="#fff" stroke-width="1.6" stroke-linejoin="round"/></svg>
<div class="t" style="top:321.72px;font-size:11.5px;color:#fff;font-weight:700;font-family:'Liberation Sans', sans-serif;left:935.91px;width:600px;text-align:center;">59%</div>
<div class="t" style="top:299.41px;font-size:11.5px;color:#fff;font-weight:700;font-family:'Liberation Sans', sans-serif;left:859.09px;width:600px;text-align:center;">41%</div>
<div class="t" style="top:309.03px;font-size:14.5px;color:#555e6c;font-weight:700;font-family:'Liberation Sans', sans-serif;left:897.50px;width:600px;text-align:center;">себес.</div>
<svg class="r" style="left:0;top:0" width="1433" height="782"><path d="M1314.50 262.60 A53 53 0 1 1 1294.99 364.88 L1304.56 340.70 A27 27 0 1 0 1314.50 288.60Z" fill="#c936ab" stroke="#fff" stroke-width="1.6" stroke-linejoin="round"/><path d="M1294.99 364.88 A53 53 0 0 1 1314.50 262.60 L1314.50 288.60 A27 27 0 0 0 1304.56 340.70Z" fill="#2b6afc" stroke="#fff" stroke-width="1.6" stroke-linejoin="round"/></svg>
<div class="t" style="top:318.06px;font-size:11.5px;color:#fff;font-weight:700;font-family:'Liberation Sans', sans-serif;left:1053.79px;width:600px;text-align:center;">56%</div>
<div class="t" style="top:303.07px;font-size:11.5px;color:#fff;font-weight:700;font-family:'Liberation Sans', sans-serif;left:975.21px;width:600px;text-align:center;">44%</div>
<div class="t" style="top:309.03px;font-size:14.5px;color:#555e6c;font-weight:700;font-family:'Liberation Sans', sans-serif;left:1014.50px;width:600px;text-align:center;">остаток</div>
<div class="t" style="top:392.00px;font-size:24px;color:#0b1220;font-weight:700;font-family:'Liberation Serif', serif;left:956.00px;width:600px;text-align:center;"><span class="dg">4284</span> шт.</div>
<div class="r" style="left:271.00px;top:538.00px;width:558.00px;height:260.00px;background:#f7eafc;border-radius:12px;box-shadow:inset 0 0 0 1px #dcdcee;"></div>
<svg class="r" style="left:296.00px;top:568.00px;" width="20" height="17" viewBox="0 0 20 17"><path d="M1.3 1.3 V13.2 Q1.3 15.7 3.8 15.7 H18.7" stroke="#2452e6" stroke-width="2.6" fill="none" stroke-linecap="round"/><rect x="5.1" y="2" width="9.8" height="2.7" rx="1.35" fill="#2452e6"/><rect x="5.1" y="6.1" width="7.1" height="2.7" rx="1.35" fill="#2452e6"/><rect x="5.1" y="9.6" width="12.1" height="2.6" rx="1.3" fill="#2452e6"/></svg>
<div class="t" style="top:568.15px;font-size:20px;color:#0b1220;font-weight:700;font-family:'Liberation Serif', serif;left:322.00px;">WB: Показатели</div>
<div class="r" style="left:853.00px;top:538.00px;width:558.00px;height:260.00px;background:#dde6fd;border-radius:12px;box-shadow:inset 0 0 0 1px #d3dcf0;"></div>
<svg class="r" style="left:878.00px;top:568.00px;" width="20" height="17" viewBox="0 0 20 17"><path d="M1.3 1.3 V13.2 Q1.3 15.7 3.8 15.7 H18.7" stroke="#e4531b" stroke-width="2.6" fill="none" stroke-linecap="round"/><rect x="5.1" y="2" width="9.8" height="2.7" rx="1.35" fill="#e4531b"/><rect x="5.1" y="6.1" width="7.1" height="2.7" rx="1.35" fill="#e4531b"/><rect x="5.1" y="9.6" width="12.1" height="2.6" rx="1.3" fill="#e4531b"/></svg>
<div class="t" style="top:568.15px;font-size:20px;color:#0b1220;font-weight:700;font-family:'Liberation Serif', serif;left:904.00px;">Ozon: Показатели</div>
<div class="r" style="left:296.50px;top:615.00px;width:242.00px;height:178.00px;background:#fff;border-radius:12px;box-shadow:inset 0 0 0 1px #bcd6fc;"></div>
<svg class="r" style="left:313.00px;top:633.50px;" width="16" height="14" viewBox="0 0 18 16"><path d="M0.5 0.6 H3 L3.6 2 H17.5 L16 9.4 Q15.7 10.4 14.6 10.4 H5.6 L5.9 11.8 H15.8 V13.2 H4.8 L2.2 2 H0.5Z" fill="#2452e6"/><circle cx="5.8" cy="14.8" r="1.2" fill="#2452e6"/><circle cx="14.4" cy="14.8" r="1.2" fill="#2452e6"/></svg>
<div class="t" style="top:634.68px;font-size:14px;color:#4b5563;font-weight:400;font-family:'Liberation Serif', serif;left:333.00px;">Заказы WB сегодня</div>
<div class="t" style="top:660.60px;font-size:24px;color:#0b1220;font-weight:700;font-family:'Liberation Serif', serif;left:335.80px;"><span class="dg">86</span></div>
<div class="t" style="top:668.98px;font-size:14px;color:#6b7280;font-weight:400;font-family:'Liberation Serif', serif;left:371.50px;">шт.</div>
<div class="t" style="top:665.62px;font-size:18px;color:#1f2937;font-weight:700;font-family:'Liberation Serif', serif;left:403.20px;">206 936,00 <span class="rub">Р</span></div>
<div class="t" style="top:703.09px;left:320.00px;width:50px;text-align:center;font-size:11px;color:#7b8494;font-weight:400">вчера</div>
<div class="t" style="top:718.85px;left:320.00px;width:50px;text-align:center;font-size:12px;color:#15803d;font-weight:400"><svg class="ar" width="6.5" height="8" viewBox="0 0 6.5 8"><path d="M3.25 8 V1.2 M0.6 3.6 L3.25 0.9 L5.9 3.6" stroke="currentColor" stroke-width="1.4" fill="none"/></svg><span style="font-weight:700;font-size:12px">17.8%</span> <span style="color:#8a919c;font-size:12px">шт</span></div>
<div class="t" style="top:734.85px;left:320.00px;width:50px;text-align:center;font-size:12px;color:#15803d;font-weight:400"><svg class="ar" width="6.5" height="8" viewBox="0 0 6.5 8"><path d="M3.25 8 V1.2 M0.6 3.6 L3.25 0.9 L5.9 3.6" stroke="currentColor" stroke-width="1.4" fill="none"/></svg><span style="font-weight:700;font-size:12px">23.9%</span> <span style="color:#8a919c;font-size:12px"><span class="rub">Р</span></span></div>
<div class="t" style="top:752.09px;left:320.00px;width:50px;text-align:center;font-size:11px;color:#374151;font-weight:400">всего: 1…</div>
<div class="t" style="top:703.09px;left:391.50px;width:50px;text-align:center;font-size:11px;color:#7b8494;font-weight:400">нед.</div>
<div class="t" style="top:718.85px;left:391.50px;width:50px;text-align:center;font-size:12px;color:#15803d;font-weight:400"><svg class="ar" width="6.5" height="8" viewBox="0 0 6.5 8"><path d="M3.25 8 V1.2 M0.6 3.6 L3.25 0.9 L5.9 3.6" stroke="currentColor" stroke-width="1.4" fill="none"/></svg><span style="font-weight:700;font-size:12px">24.6%</span> <span style="color:#8a919c;font-size:12px">шт</span></div>
<div class="t" style="top:734.85px;left:391.50px;width:50px;text-align:center;font-size:12px;color:#15803d;font-weight:400"><svg class="ar" width="6.5" height="8" viewBox="0 0 6.5 8"><path d="M3.25 8 V1.2 M0.6 3.6 L3.25 0.9 L5.9 3.6" stroke="currentColor" stroke-width="1.4" fill="none"/></svg><span style="font-weight:700;font-size:12px">30.6%</span> <span style="color:#8a919c;font-size:12px"><span class="rub">Р</span></span></div>
<div class="t" style="top:752.09px;left:391.50px;width:50px;text-align:center;font-size:11px;color:#374151;font-weight:400">всего: 1…</div>
<div class="t" style="top:711.09px;left:464.00px;width:50px;text-align:center;font-size:11px;color:#7b8494;font-weight:400">за месяц:</div>
<div class="t" style="top:727.09px;left:464.00px;width:50px;text-align:center;font-size:11px;color:#3b4350;font-weight:400"><b style="color:#3b4350">2089</b> <span style="color:#8a919c">шт.</span></div>
<div class="t" style="top:743.49px;left:464.00px;width:50px;text-align:center;font-size:11px;color:#3b4350;font-weight:400"><b>4 884 9</b><span style="font-weight:400;color:#6b7280">…</span></div>
<div class="r" style="left:562.00px;top:615.00px;width:242.00px;height:178.00px;background:#fff;border-radius:12px;box-shadow:inset 0 0 0 1px #bcd6fc;"></div>
<svg class="r" style="left:578.50px;top:633.50px;" width="15" height="14" viewBox="0 0 16 15"><path d="M1 0.5 V13.5 H15.5" stroke="#1e9a3c" stroke-width="1.8" fill="none"/><path d="M3.8 9.8 L7 6.2 L9.6 8.4 L14 3.6" stroke="#1e9a3c" stroke-width="1.8" fill="none" stroke-linejoin="round"/></svg>
<div class="t" style="top:634.68px;font-size:14px;color:#4b5563;font-weight:400;font-family:'Liberation Serif', serif;left:598.50px;">Продажи WB сегодня</div>
<div class="t" style="top:660.60px;font-size:24px;color:#0b1220;font-weight:700;font-family:'Liberation Serif', serif;left:606.20px;"><span class="dg">29</span></div>
<div class="t" style="top:668.98px;font-size:14px;color:#6b7280;font-weight:400;font-family:'Liberation Serif', serif;left:642.60px;">шт.</div>
<div class="t" style="top:665.62px;font-size:18px;color:#1f2937;font-weight:700;font-family:'Liberation Serif', serif;left:673.60px;">66 906,00 <span class="rub">Р</span></div>
<div class="t" style="top:703.09px;left:586.40px;width:50px;text-align:center;font-size:11px;color:#7b8494;font-weight:400">вчера</div>
<div class="t" style="top:718.85px;left:586.40px;width:50px;text-align:center;font-size:12px;color:#15803d;font-weight:400"><svg class="ar" width="6.5" height="8" viewBox="0 0 6.5 8"><path d="M3.25 8 V1.2 M0.6 3.6 L3.25 0.9 L5.9 3.6" stroke="currentColor" stroke-width="1.4" fill="none"/></svg><span style="font-weight:700;font-size:12px">0.0%</span> <span style="color:#8a919c;font-size:12px">шт</span></div>
<div class="t" style="top:734.85px;left:586.40px;width:50px;text-align:center;font-size:12px;color:#15803d;font-weight:400"><svg class="ar" width="6.5" height="8" viewBox="0 0 6.5 8"><path d="M3.25 8 V1.2 M0.6 3.6 L3.25 0.9 L5.9 3.6" stroke="currentColor" stroke-width="1.4" fill="none"/></svg><span style="font-weight:700;font-size:12px">0.0%</span> <span style="color:#8a919c;font-size:12px"><span class="rub">Р</span></span></div>
<div class="t" style="top:752.09px;left:586.40px;width:50px;text-align:center;font-size:11px;color:#374151;font-weight:400">всего: 9…</div>
<div class="t" style="top:703.09px;left:658.00px;width:50px;text-align:center;font-size:11px;color:#7b8494;font-weight:400">нед.</div>
<div class="t" style="top:718.85px;left:658.00px;width:50px;text-align:center;font-size:12px;color:#15803d;font-weight:400"><svg class="ar" width="6.5" height="8" viewBox="0 0 6.5 8"><path d="M3.25 8 V1.2 M0.6 3.6 L3.25 0.9 L5.9 3.6" stroke="currentColor" stroke-width="1.4" fill="none"/></svg><span style="font-weight:700;font-size:12px">0.0%</span> <span style="color:#8a919c;font-size:12px">шт</span></div>
<div class="t" style="top:734.85px;left:658.00px;width:50px;text-align:center;font-size:12px;color:#15803d;font-weight:400"><svg class="ar" width="6.5" height="8" viewBox="0 0 6.5 8"><path d="M3.25 8 V1.2 M0.6 3.6 L3.25 0.9 L5.9 3.6" stroke="currentColor" stroke-width="1.4" fill="none"/></svg><span style="font-weight:700;font-size:12px">0.0%</span> <span style="color:#8a919c;font-size:12px"><span class="rub">Р</span></span></div>
<div class="t" style="top:752.09px;left:658.00px;width:50px;text-align:center;font-size:11px;color:#374151;font-weight:400">всего: 6…</div>
<div class="t" style="top:711.09px;left:729.80px;width:50px;text-align:center;font-size:11px;color:#7b8494;font-weight:400">за месяц:</div>
<div class="t" style="top:727.09px;left:729.80px;width:50px;text-align:center;font-size:11px;color:#3b4350;font-weight:400"><b style="color:#3b4350">984</b> <span style="color:#8a919c">шт.</span></div>
<div class="t" style="top:743.49px;left:729.80px;width:50px;text-align:center;font-size:11px;color:#3b4350;font-weight:400"><b>2 174 7</b><span style="font-weight:400;color:#6b7280">…</span></div>
<div class="r" style="left:878.00px;top:615.00px;width:242.00px;height:178.00px;background:#fff;border-radius:12px;box-shadow:inset 0 0 0 1px #fcd6ab;"></div>
<svg class="r" style="left:894.50px;top:633.50px;" width="16" height="14" viewBox="0 0 18 16"><path d="M0.5 0.6 H3 L3.6 2 H17.5 L16 9.4 Q15.7 10.4 14.6 10.4 H5.6 L5.9 11.8 H15.8 V13.2 H4.8 L2.2 2 H0.5Z" fill="#e8541c"/><circle cx="5.8" cy="14.8" r="1.2" fill="#e8541c"/><circle cx="14.4" cy="14.8" r="1.2" fill="#e8541c"/></svg>
<div class="t" style="top:634.68px;font-size:14px;color:#4b5563;font-weight:400;font-family:'Liberation Serif', serif;left:914.50px;">Заказы Ozon сегодня</div>
<div class="t" style="top:660.60px;font-size:24px;color:#0b1220;font-weight:700;font-family:'Liberation Serif', serif;left:921.80px;"><span class="dg">22</span></div>
<div class="t" style="top:668.98px;font-size:14px;color:#6b7280;font-weight:400;font-family:'Liberation Serif', serif;left:958.00px;">шт.</div>
<div class="t" style="top:665.62px;font-size:18px;color:#1f2937;font-weight:700;font-family:'Liberation Serif', serif;left:989.60px;">37 276,00 <span class="rub">Р</span></div>
<div class="t" style="top:703.09px;left:902.20px;width:50px;text-align:center;font-size:11px;color:#7b8494;font-weight:400">вчера</div>
<div class="t" style="top:718.85px;left:902.20px;width:50px;text-align:center;font-size:12px;color:#15803d;font-weight:400"><svg class="ar" width="6.5" height="8" viewBox="0 0 6.5 8"><path d="M3.25 8 V1.2 M0.6 3.6 L3.25 0.9 L5.9 3.6" stroke="currentColor" stroke-width="1.4" fill="none"/></svg><span style="font-weight:700;font-size:12px">0.0%</span> <span style="color:#8a919c;font-size:12px">шт</span></div>
<div class="t" style="top:734.85px;left:902.20px;width:50px;text-align:center;font-size:12px;color:#15803d;font-weight:400"><svg class="ar" width="6.5" height="8" viewBox="0 0 6.5 8"><path d="M3.25 8 V1.2 M0.6 3.6 L3.25 0.9 L5.9 3.6" stroke="currentColor" stroke-width="1.4" fill="none"/></svg><span style="font-weight:700;font-size:12px">50.9%</span> <span style="color:#8a919c;font-size:12px"><span class="rub">Р</span></span></div>
<div class="t" style="top:752.09px;left:902.20px;width:50px;text-align:center;font-size:11px;color:#374151;font-weight:400">всего: 2…</div>
<div class="t" style="top:703.09px;left:973.90px;width:50px;text-align:center;font-size:11px;color:#7b8494;font-weight:400">нед.</div>
<div class="t" style="top:718.85px;left:973.90px;width:50px;text-align:center;font-size:12px;color:#dc2626;font-weight:400"><svg class="ar" width="6.5" height="8" viewBox="0 0 6.5 8"><path d="M3.25 0 V6.8 M0.6 4.4 L3.25 7.1 L5.9 4.4" stroke="currentColor" stroke-width="1.4" fill="none"/></svg><span style="font-weight:700;font-size:12px">51.1%</span> <span style="color:#8a919c;font-size:12px">шт</span></div>
<div class="t" style="top:734.85px;left:973.90px;width:50px;text-align:center;font-size:12px;color:#dc2626;font-weight:400"><svg class="ar" width="6.5" height="8" viewBox="0 0 6.5 8"><path d="M3.25 0 V6.8 M0.6 4.4 L3.25 7.1 L5.9 4.4" stroke="currentColor" stroke-width="1.4" fill="none"/></svg><span style="font-weight:700;font-size:12px">69.5%</span> <span style="color:#8a919c;font-size:12px"><span class="rub">Р</span></span></div>
<div class="t" style="top:752.09px;left:973.90px;width:50px;text-align:center;font-size:11px;color:#374151;font-weight:400">всего: 1…</div>
<div class="t" style="top:711.09px;left:1045.60px;width:50px;text-align:center;font-size:11px;color:#7b8494;font-weight:400">за месяц:</div>
<div class="t" style="top:727.09px;left:1045.60px;width:50px;text-align:center;font-size:11px;color:#3b4350;font-weight:400"><b style="color:#3b4350">1213</b> <span style="color:#8a919c">шт.</span></div>
<div class="t" style="top:743.49px;left:1045.60px;width:50px;text-align:center;font-size:11px;color:#3b4350;font-weight:400"><b>2 933 7</b><span style="font-weight:400;color:#6b7280">…</span></div>
<div class="r" style="left:1144.00px;top:615.00px;width:242.00px;height:178.00px;background:#fff;border-radius:12px;box-shadow:inset 0 0 0 1px #fcd6ab;"></div>
<svg class="r" style="left:1160.50px;top:633.50px;" width="15" height="14" viewBox="0 0 16 15"><path d="M1 0.5 V13.5 H15.5" stroke="#1e9a3c" stroke-width="1.8" fill="none"/><path d="M3.8 9.8 L7 6.2 L9.6 8.4 L14 3.6" stroke="#1e9a3c" stroke-width="1.8" fill="none" stroke-linejoin="round"/></svg>
<div class="t" style="top:634.68px;font-size:14px;color:#4b5563;font-weight:400;font-family:'Liberation Serif', serif;left:1180.50px;">Продажи Ozon сегодня</div>
<svg class="r" style="left:1322.80px;top:633.80px;" width="14.4" height="14.4" viewBox="0 0 14 14"><circle cx="7" cy="7" r="7" fill="#dc4a17"/><circle cx="7" cy="4" r="1.1" fill="#fff"/><path d="M5.6 6 H7.8 V10 H8.6 V11 H5.6 V10 H6.4 V7 H5.6Z" fill="#fff"/></svg>
<div class="t" style="top:660.60px;font-size:24px;color:#0b1220;font-weight:700;font-family:'Liberation Serif', serif;left:1188.80px;"><span class="dg">16</span></div>
<div class="t" style="top:668.98px;font-size:14px;color:#6b7280;font-weight:400;font-family:'Liberation Serif', serif;left:1223.80px;">шт.</div>
<div class="t" style="top:665.62px;font-size:18px;color:#1f2937;font-weight:700;font-family:'Liberation Serif', serif;left:1255.20px;">46 491,00 <span class="rub">Р</span></div>
<div class="t" style="top:703.09px;left:1168.00px;width:50px;text-align:center;font-size:11px;color:#7b8494;font-weight:400">вчера</div>
<div class="t" style="top:718.85px;left:1168.00px;width:50px;text-align:center;font-size:12px;color:#dc2626;font-weight:400"><svg class="ar" width="6.5" height="8" viewBox="0 0 6.5 8"><path d="M3.25 0 V6.8 M0.6 4.4 L3.25 7.1 L5.9 4.4" stroke="currentColor" stroke-width="1.4" fill="none"/></svg><span style="font-weight:700;font-size:12px">36.0%</span> <span style="color:#8a919c;font-size:12px">шт</span></div>
<div class="t" style="top:734.85px;left:1168.00px;width:50px;text-align:center;font-size:12px;color:#dc2626;font-weight:400"><svg class="ar" width="6.5" height="8" viewBox="0 0 6.5 8"><path d="M3.25 0 V6.8 M0.6 4.4 L3.25 7.1 L5.9 4.4" stroke="currentColor" stroke-width="1.4" fill="none"/></svg><span style="font-weight:700;font-size:12px">35.2%</span> <span style="color:#8a919c;font-size:12px"><span class="rub">Р</span></span></div>
<div class="t" style="top:752.09px;left:1168.00px;width:50px;text-align:center;font-size:11px;color:#374151;font-weight:400">всего: 7…</div>
<div class="t" style="top:703.09px;left:1240.00px;width:50px;text-align:center;font-size:11px;color:#7b8494;font-weight:400">нед.</div>
<div class="t" style="top:718.85px;left:1240.00px;width:50px;text-align:center;font-size:12px;color:#15803d;font-weight:400"><svg class="ar" width="6.5" height="8" viewBox="0 0 6.5 8"><path d="M3.25 8 V1.2 M0.6 3.6 L3.25 0.9 L5.9 3.6" stroke="currentColor" stroke-width="1.4" fill="none"/></svg><span style="font-weight:700;font-size:12px">33.3%</span> <span style="color:#8a919c;font-size:12px">шт</span></div>
<div class="t" style="top:734.85px;left:1240.00px;width:50px;text-align:center;font-size:12px;color:#15803d;font-weight:400"><svg class="ar" width="6.5" height="8" viewBox="0 0 6.5 8"><path d="M3.25 8 V1.2 M0.6 3.6 L3.25 0.9 L5.9 3.6" stroke="currentColor" stroke-width="1.4" fill="none"/></svg><span style="font-weight:700;font-size:12px">32.5%</span> <span style="color:#8a919c;font-size:12px"><span class="rub">Р</span></span></div>
<div class="t" style="top:752.09px;left:1240.00px;width:50px;text-align:center;font-size:11px;color:#374151;font-weight:400">всего: 3…</div>
<div class="t" style="top:711.09px;left:1310.50px;width:50px;text-align:center;font-size:11px;color:#7b8494;font-weight:400">за месяц:</div>
<div class="t" style="top:727.09px;left:1310.50px;width:50px;text-align:center;font-size:11px;color:#3b4350;font-weight:400"><b style="color:#3b4350">458</b> <span style="color:#8a919c">шт.</span></div>
<div class="t" style="top:743.49px;left:1310.50px;width:50px;text-align:center;font-size:11px;color:#3b4350;font-weight:400"><b>1 332 9</b><span style="font-weight:400;color:#6b7280">…</span></div>
<div class="r" style="left:1351.00px;top:703.00px;width:56.00px;height:56.00px;background:linear-gradient(135deg,#f2aa22,#d8650e);border-radius:28px;box-shadow:0 6px 16px rgba(30,60,140,0.22);"></div>
<svg class="r" style="left:1368.00px;top:720.00px;" width="22" height="20" viewBox="0 0 22 20"><path d="M11 1 Q21 1 21 8.6 Q21 16.2 11 16.2 Q9.4 16.2 8 15.8 Q5.6 18.2 2.2 18.6 Q4.2 16.6 4.4 14.6 Q1 12.4 1 8.6 Q1 1 11 1Z" fill="#fff"/><circle cx="6.6" cy="8.7" r="1.4" fill="#e08a1a"/><circle cx="11" cy="8.7" r="1.4" fill="#e08a1a"/><circle cx="15.4" cy="8.7" r="1.4" fill="#e08a1a"/></svg>
<!--MAIN-->
</body></html>
